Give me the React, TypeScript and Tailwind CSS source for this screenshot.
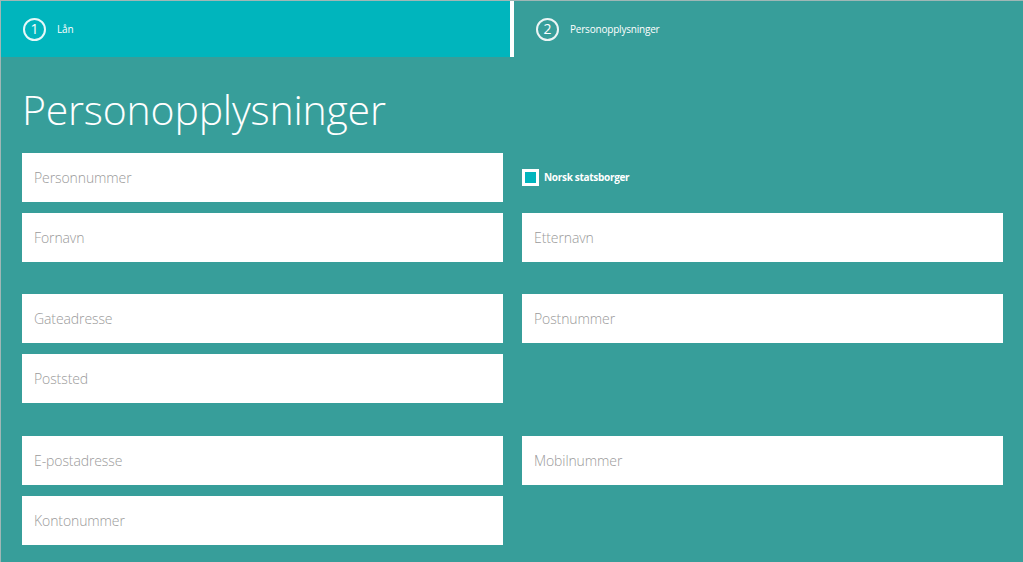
import React from 'react';

const FONT = { fontFamily: '"Open Sans", "Liberation Sans", sans-serif' };

function Field({ label }: { label: string }) {
  return (
    <div className="h-[49px] bg-white flex items-center px-3">
      <span className="text-[14px] font-light text-[#9a9a9a] tracking-[-0.1px]">{label}</span>
    </div>
  );
}

function Step({ n, label, active }: { n: number; label: string; active?: boolean }) {
  return (
    <div className={`flex-1 h-full flex items-center pl-[22px] gap-[11px] ${active ? 'bg-[#00b5bd]' : 'bg-[#379e9a]'}`}>
      <div className="w-[23px] h-[23px] rounded-full border-2 border-white/90 flex items-center justify-center text-white text-[14px] font-normal leading-none">
        {n}
      </div>
      <span className="text-white text-[10px] tracking-[-0.2px]">{label}</span>
    </div>
  );
}

export default function App() {
  return (
    <div className="w-[1023px] h-[562px] bg-[#379e9a] border-t border-l border-[#9fb7b6] overflow-hidden flex flex-col" style={FONT}>
      <div className="h-[56px] flex shrink-0">
        <Step n={1} label="Lån" active />
        <div className="w-[4px] bg-white" />
        <Step n={2} label="Personopplysninger" />
      </div>

      <div className="pl-[21px] pr-[20px] flex flex-col">
        <h1 className="text-white text-[41px] font-light leading-none mt-[32px] mb-[23px] tracking-[-0.2px]">Personopplysninger</h1>

        <div className="grid grid-cols-2 gap-x-[19px] gap-y-[11px]">
          <Field label="Personnummer" />
          <div className="flex items-center gap-[5px]">
            <div className="w-[17px] h-[17px] bg-white p-[3px]">
              <div className="w-full h-full bg-[#00b5bd]" />
            </div>
            <span className="text-white text-[10px] font-bold tracking-[-0.3px]">Norsk statsborger</span>
          </div>
          <Field label="Fornavn" />
          <Field label="Etternavn" />
        </div>

        <div className="grid grid-cols-2 gap-x-[19px] gap-y-[11px] mt-[32px]">
          <Field label="Gateadresse" />
          <Field label="Postnummer" />
          <Field label="Poststed" />
          <div />
        </div>

        <div className="grid grid-cols-2 gap-x-[19px] gap-y-[11px] mt-[33px]">
          <Field label="E-postadresse" />
          <Field label="Mobilnummer" />
          <Field label="Kontonummer" />
          <div />
        </div>
      </div>
    </div>
  );
}
